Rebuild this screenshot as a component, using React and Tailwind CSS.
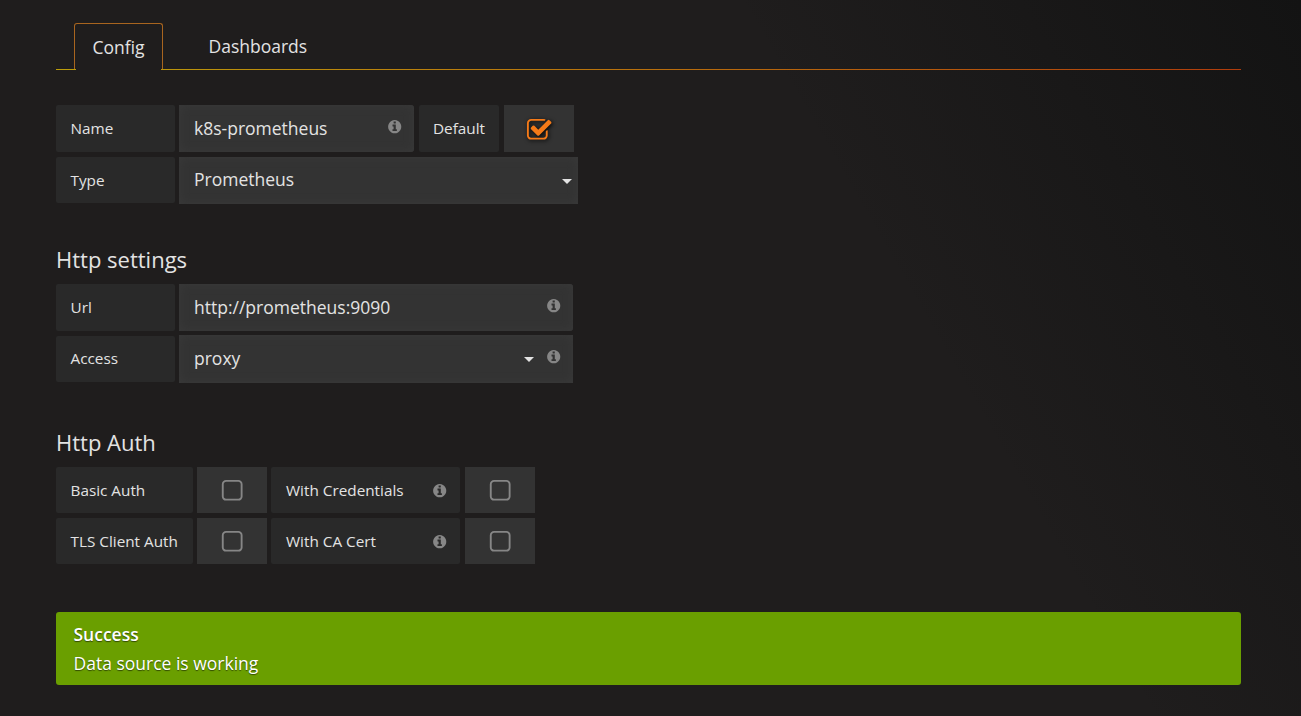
import clsx from 'clsx';

const ICONS = {
  info: 'M1152 1376v-160q0-14-9-23t-23-9h-96v-512q0-14-9-23t-23-9h-320q-14 0-23 9t-9 23v160q0 14 9 23t23 9h96v320h-96q-14 0-23 9t-9 23v160q0 14 9 23t23 9h448q14 0 23-9t9-23zm-128-896v-160q0-14-9-23t-23-9h-192q-14 0-23 9t-9 23v160q0 14 9 23t23 9h192q14 0 23-9t9-23zm640 416q0 209-103 385.5t-279.5 279.5-385.5 103-385.5-103-279.5-279.5-103-385.5 103-385.5 279.5-279.5 385.5-103 385.5 103 279.5 279.5 103 385.5z',
  square: 'M1312 256h-832q-66 0-113 47t-47 113v832q0 66 47 113t113 47h832q66 0 113-47t47-113v-832q0-66-47-113t-113-47zm288 160v832q0 119-84.5 203.5t-203.5 84.5h-832q-119 0-203.5-84.5t-84.5-203.5v-832q0-119 84.5-203.5t203.5-84.5h832q119 0 203.5 84.5t84.5 203.5z',
  checked: 'M1472 930v318q0 119-84.5 203.5t-203.5 84.5h-832q-119 0-203.5-84.5t-84.5-203.5v-832q0-119 84.5-203.5t203.5-84.5h832q63 0 117 25 15 7 18 23 3 17-9 29l-49 49q-10 10-23 10-3 0-9-2-23-6-45-6h-832q-66 0-113 47t-47 113v832q0 66 47 113t113 47h832q66 0 113-47t47-113v-254q0-13 9-22l64-64q10-10 23-10 6 0 12 3 20 8 20 29zm231-489l-814 814q-24 24-57 24t-57-24l-430-430q-24-24-24-57t24-57l110-110q24-24 57-24t57 24l263 263 647-647q24-24 57-24t57 24l110 110q24 24 24 57t-24 57z',
};

function Icon({ name, className }) {
  return (
    <svg viewBox="0 0 1792 1792" fill="currentColor" className={clsx('shrink-0', className)}>
      <path d={ICONS[name]} />
    </svg>
  );
}

function Info({ className }) {
  return <Icon name="info" className={clsx('size-[15.4px] text-[#868686]', className)} />;
}

function Caret({ className }) {
  return (
    <svg viewBox="0 0 10 5" className={clsx('h-[5px] w-[10px] shrink-0 fill-[#e3e3e3]', className)}>
      <path d="M0 0h10L5 5z" />
    </svg>
  );
}

function Label({ className, children }) {
  return (
    <div className={clsx('flex shrink-0 items-center rounded-[2px] bg-[#292929] px-[14.5px] text-[15.3px] whitespace-nowrap', className)}>
      {children}
    </div>
  );
}

function Field({ className, value, children }) {
  return (
    <div className={clsx('flex shrink-0 items-center bg-[#333333] pl-[15px] text-[17.5px] shadow-[inset_0_0_8px_1px_#393939]', className)}>
      <span className="flex-1">{value}</span>
      {children}
    </div>
  );
}

function Checkbox({ checked, className }) {
  return (
    <div className={clsx('flex w-[70px] shrink-0 items-center justify-center bg-[#333333] pt-[3px] pr-[0.5px]', className)}>
      {checked ? (
        <Icon name="checked" className="size-[26.4px] text-[#f57a18] drop-shadow-[1px_1px_2px_#000]" />
      ) : (
        <Icon name="square" className="size-[26.4px] text-[#868686]" />
      )}
    </div>
  );
}

function AuthRow({ left, right }) {
  return (
    <div className="flex h-[46px]">
      <Label className="w-[137px] pt-[2px]">{left}</Label>
      <Checkbox className="ml-1" />
      <Label className="ml-1 w-[189px] justify-between">
        <span className="pt-[2px] pl-[0.5px]">{right}</span>
        <Info className="mt-[2px] -mr-[1.5px]" />
      </Label>
      <Checkbox className="ml-[5px]" />
    </div>
  );
}

function Tabs() {
  return (
    <div>
      <div className="flex h-[46px] pl-[18px]">
        <div className="flex w-[89px] items-center justify-center rounded-t-[3px] border border-b-0 border-[#a8651f] pt-[3px] text-[17.5px]">
          Config
        </div>
        <div className="ml-[45.5px] flex items-center pt-[2px] text-[17.5px]">Dashboards</div>
      </div>
      <div className="h-px bg-linear-to-r from-[#bc9d0a] to-[#b03c0c]">
        {/* opens the rule under the active tab */}
        <div className="ml-5 h-px w-[85px] bg-[#1f1d1d]" />
      </div>
    </div>
  );
}

export default function App() {
  return (
    <div
      className="h-[716px] w-[1301px] overflow-hidden bg-[#1f1d1d] bg-[linear-gradient(60deg,transparent_67%,#131313_100%)] pt-[23px] pr-[60px] pl-14 leading-none text-[#e3e3e3]"
      style={{ fontFamily: '"Open Sans", sans-serif' }}
    >
      <Tabs />

      <div className="mt-[35px] flex h-[47px]">
        <Label className="w-[119px]">Name</Label>
        <Field className="ml-1 w-[235px] rounded-r-[3px]" value="k8s-prometheus">
          <Info className="mr-3 mb-1" />
        </Field>
        <Label className="ml-[5px] w-20 px-[14px]">Default</Label>
        <Checkbox checked className="ml-[5px]" />
      </div>
      <div className="mt-[5px] flex h-[47px]">
        <Label className="mb-px w-[119px] pt-[2px]">Type</Label>
        <Field className="ml-1 w-[399px] pb-[2px]" value="Prometheus">
          <Caret className="mr-[6px] -mb-[3px]" />
        </Field>
      </div>

      <h3 className="mt-[43px] flex h-6 items-center text-[22px]">Http settings</h3>
      <div className="mt-[13px] flex h-[47px]">
        <Label className="w-[119px]">Url</Label>
        <Field className="ml-1 w-[394px] rounded-r-[3px]" value="http://prometheus:9090">
          <Info className="mr-3 mb-1" />
        </Field>
      </div>
      <div className="mt-1 flex h-12">
        <Label className="mt-px mb-px w-[119px]">Access</Label>
        <Field className="ml-1 w-[394px]" value="proxy">
          <Caret className="mr-3" />
          <Info className="mr-[11.5px] mb-[5px]" />
        </Field>
      </div>

      <h3 className="mt-[47px] flex h-6 items-center text-[22px]">Http Auth</h3>
      <div className="mt-[13px] flex flex-col gap-[5px]">
        <AuthRow left="Basic Auth" right="With Credentials" />
        <AuthRow left="TLS Client Auth" right="With CA Cert" />
      </div>

      <div className="mt-12 h-[73px] rounded-[3px] bg-[#6a9f00] pt-2 pl-[17.5px] text-[17.5px] leading-[29px] text-white [text-shadow:0_1px_1px_#0008]">
        <div className="font-semibold">Success</div>
        <div>Data source is working</div>
      </div>
    </div>
  );
}
